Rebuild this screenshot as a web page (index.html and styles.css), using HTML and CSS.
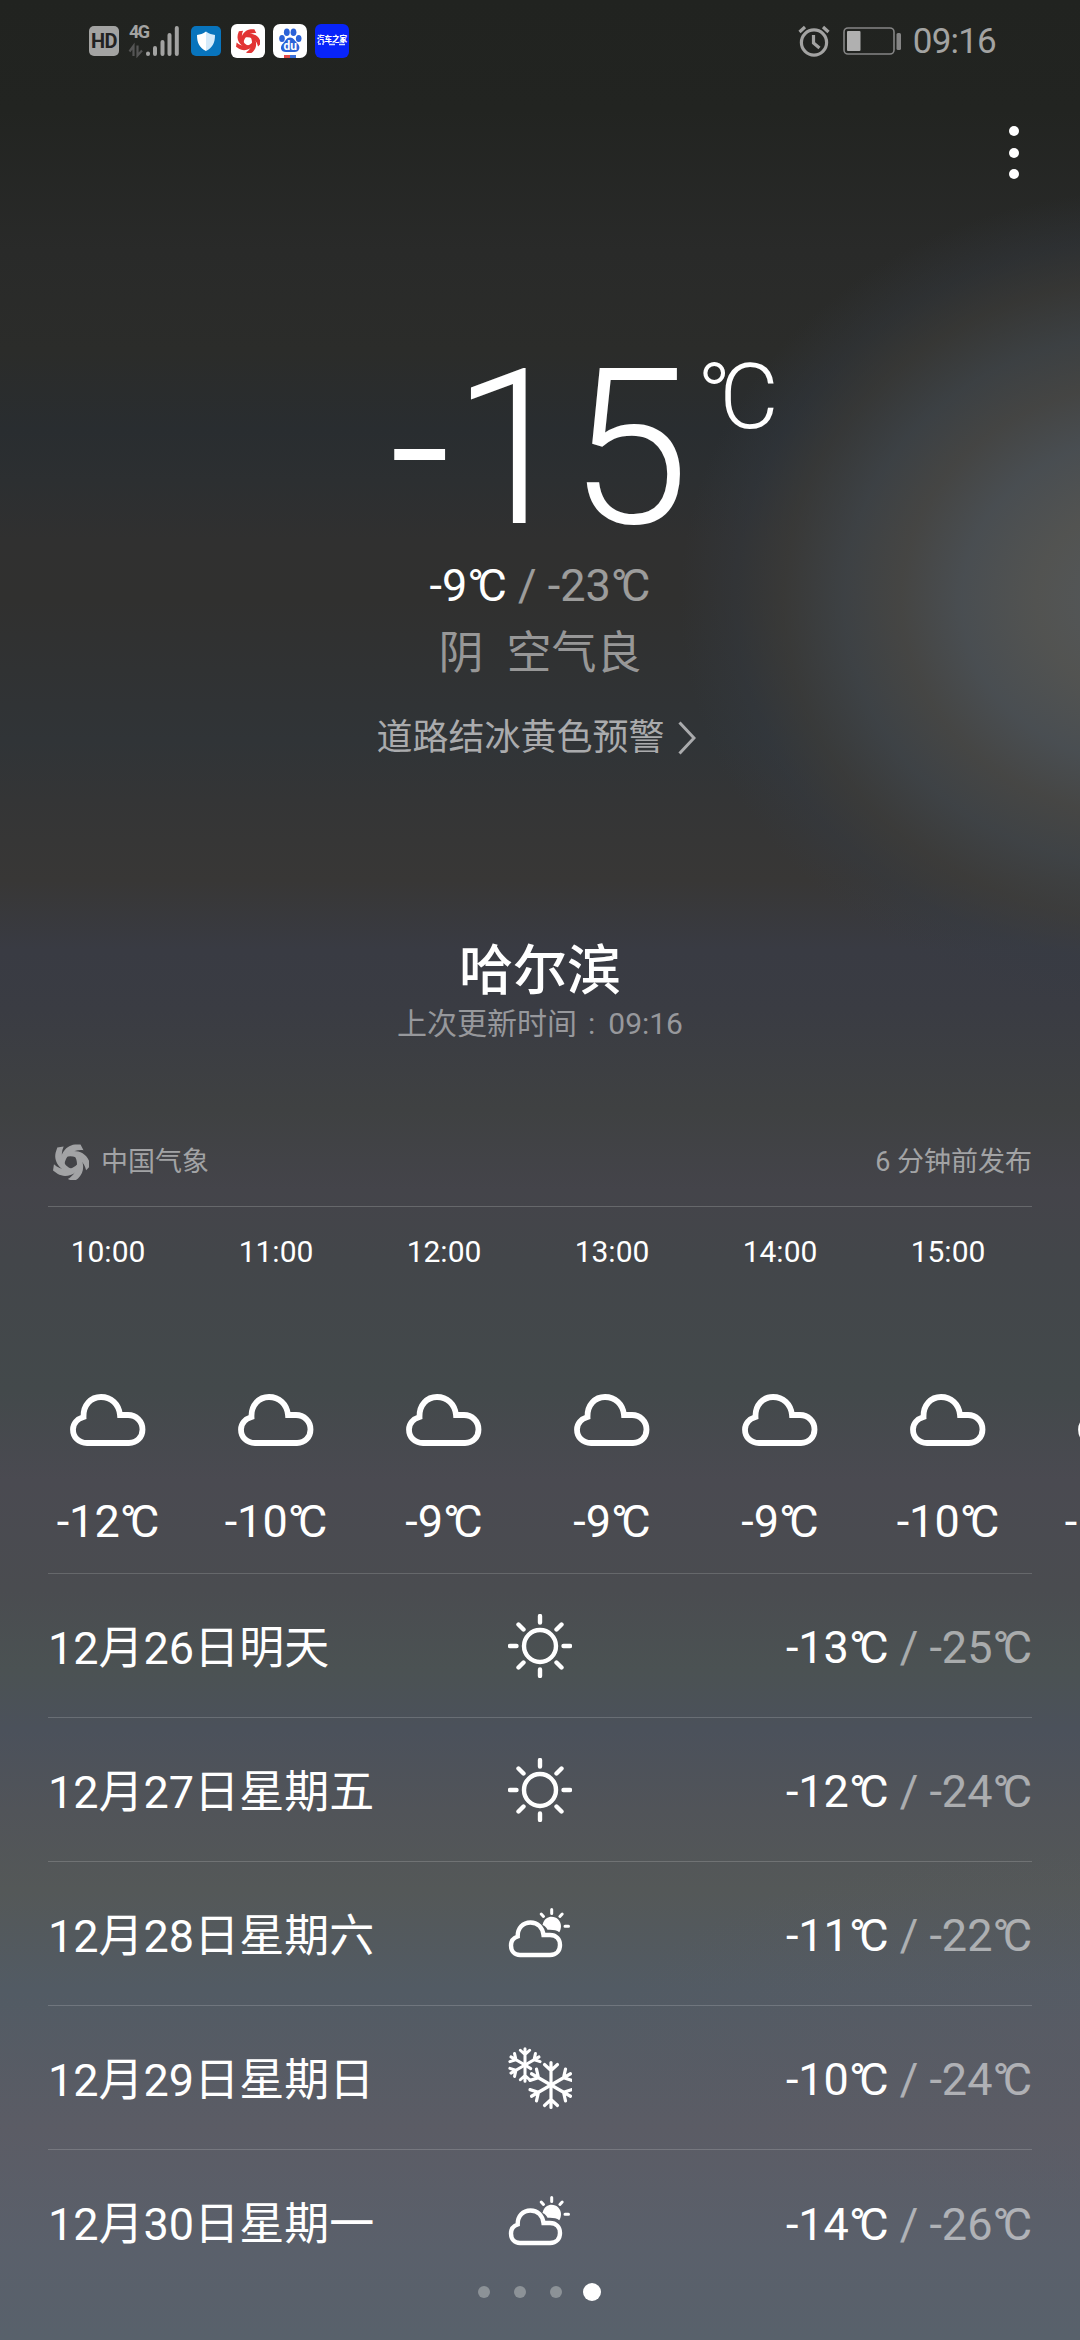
FILE: index.html
```html
<!DOCTYPE html>
<html lang="zh-CN">
<head>
<meta charset="utf-8">
<title>哈尔滨天气</title>
<link rel="stylesheet" href="styles.css">
</head>
<body>
<svg width="0" height="0" class="defs">
  <defs>
    <symbol id="cloud" viewBox="0 0 76 52">
      <path d="M17 49H59C67 49 72.500 43 72.500 35.500C72.500 27 66 21 58 21H50C49 10 41 3 31 3C21 3 13 11 13.500 23C7 25 3 30 3 35.500C3 43 8.500 49 17 49Z" fill="none" stroke="#fff" stroke-width="5.800"/>
    </symbol>
    <symbol id="sun" viewBox="0 0 64 64">
      <g fill="none" stroke="#fff" stroke-width="4.400" stroke-linecap="round">
        <circle cx="32" cy="32" r="16"/>
        <path d="M32 2V8.500M32 55.500V62M2 32H8.500M55.500 32H62M10.500 10.500L15.500 15.500M48.500 48.500L53.500 53.500M53.500 10.500L48.500 15.500M15.500 48.500L10.500 53.500"/>
      </g>
    </symbol>
    <symbol id="partly" viewBox="0 0 64 52">
      <path d="M34.500 17C36 10.500 40 8.700 43.500 8.700C49 8.700 53 13 53 18C53 20.500 52.300 22.500 51.300 24.300C48.500 22 44.500 21.500 39.500 21.800C38.500 19.500 37 18 34.500 17Z" fill="#fff"/>
      <path d="M43.700 1.500V5.500M33.200 6L35.500 8.500M54.200 6L51.900 8.500M57 18.200H60.500" fill="none" stroke="#fff" stroke-width="3" stroke-linecap="round"/>
      <path d="M12 47H42C48.500 47 52 42.500 52 37C52 31 48 27 42 27H35.500C34.500 19 29.500 14.500 22.500 14.500C15 14.500 9.500 20 9.700 28.500C5 30 3 33.500 3 37.500C3 43 6.500 47 12 47Z" fill="none" stroke="#fff" stroke-width="4.400"/>
    </symbol>
    <symbol id="snow" viewBox="0 0 64 64">
      <g fill="none" stroke="#fff" stroke-linecap="round">
        <g transform="translate(43 39)" stroke-width="3.200">
          <path id="branch" d="M0 0V-22.500M-6.500 -20.500L0 -14.500L6.500 -20.500"/>
          <use href="#branch" transform="rotate(60)"/><use href="#branch" transform="rotate(120)"/>
          <use href="#branch" transform="rotate(180)"/><use href="#branch" transform="rotate(240)"/>
          <use href="#branch" transform="rotate(300)"/>
        </g>
        <g transform="translate(17 19) scale(.72)" stroke-width="4.200">
          <use href="#branch"/><use href="#branch" transform="rotate(60)"/>
          <path d="M0 0L8 5"/>
          <use href="#branch" transform="rotate(180)"/><use href="#branch" transform="rotate(240)"/>
          <use href="#branch" transform="rotate(300)"/>
        </g>
      </g>
    </symbol>
    <symbol id="swirl" viewBox="-18 -18 36 36">
      <path id="blade" d="M-9.500 5.500C-13 -4 -7 -16.500 4 -17.500H9.500L12.500 -11.800C2.500 -13 -6 -6.500 -6.500 3C-7.500 3.500 -8.500 4.500 -9.500 5.500Z"/>
      <use href="#blade" transform="rotate(72)"/><use href="#blade" transform="rotate(144)"/>
      <use href="#blade" transform="rotate(216)"/><use href="#blade" transform="rotate(288)"/>
    </symbol>
  </defs>
</svg>
<div class="screen">
  <header class="status">
    <div class="status-left">
      <span class="hd">HD</span>
      <div class="signal">
        <span class="net">4G</span>
        <svg width="52" height="34" viewBox="0 0 52 34">
          <path d="M5.500 32V22L1.500 27.500M9.500 21.500V31.500L14 26.500" fill="none" stroke="#555" stroke-width="2.200"/>
          <g stroke="#a3a3a2" stroke-width="4" stroke-linecap="round"><path d="M20 29.500V30M27 24V30M34.500 18V30M41.500 11V30M48.800 4V30"/></g>
        </svg>
      </div>
      <svg class="app shield" viewBox="0 0 30 30">
        <rect width="30" height="30" rx="5" fill="#0874bd"/>
        <path d="M15 5.500C12 8 9 8.500 6 9C6 17 8.500 21.500 15 25Z" fill="#fff"/>
        <path d="M15 5.500C18 8 21 8.500 24 9C24 17 21.500 21.500 15 25Z" fill="#d5eafa"/>
      </svg>
      <svg class="app" viewBox="0 0 34 34">
        <rect width="34" height="34" rx="6" fill="#fff"/>
        <use href="#swirl" x="5" y="5" width="24" height="24" fill="#e23434"/>
      </svg>
      <svg class="app" viewBox="0 0 34 34">
        <rect width="34" height="34" rx="7" fill="#fff"/>
        <g fill="#2a62d8">
          <ellipse cx="9" cy="14.500" rx="2.800" ry="3.600"/><ellipse cx="13.800" cy="8.300" rx="2.900" ry="3.800"/>
          <ellipse cx="20.500" cy="8.300" rx="2.900" ry="3.800"/><ellipse cx="25.700" cy="14.500" rx="2.800" ry="3.600"/>
          <path d="M17 13.500C20.500 13.500 22 17 24.500 19.500C28 23 26.500 28 21.500 28H13C7.500 28 6.500 23 10 19.500C12.500 17 13.500 13.500 17 13.500Z"/>
        </g>
        <text x="17.200" y="26.300" class="du">du</text>
        <rect x="11" y="31" width="6" height="3" fill="#e04a4a"/><rect x="17" y="31" width="6" height="3" fill="#3a6fd8"/>
      </svg>
      <svg class="app" viewBox="0 0 34 34">
        <rect width="34" height="34" rx="6" fill="#0824fa"/>
        <text x="17" y="17.500" class="auto">汽车之家</text>
        <path d="M3 20H6M7 20H9M14 20.500H20M24 20.500H30" stroke="#d5dcff" stroke-width="1.300"/>
      </svg>
    </div>
    <div class="status-right">
      <svg width="32" height="32" viewBox="0 0 32 32" fill="none" stroke="#a3a3a2" stroke-width="3.200">
        <circle cx="16" cy="17.500" r="12.600"/><path d="M1.500 7L7 2M30.500 7L25 2M15.500 10V18L21.500 23"/>
      </svg>
      <svg class="battery" width="60" height="28" viewBox="0 0 60 28">
        <rect x="1" y="1" width="50" height="26" rx="4" fill="none" stroke="#858585" stroke-width="1.600"/>
        <rect x="4" y="4" width="13.500" height="20" rx="1" fill="#b0b0b0"/><rect x="53.500" y="6" width="4.500" height="17" rx="1.500" fill="#858585"/>
      </svg>
      <span class="clock">09:16</span>
    </div>
  </header>

  <div class="toolbar"><div class="menu"><i></i><i></i><i></i></div></div>

  <section class="now">
    <div class="big"><span class="minus">-</span><span class="one">1</span><span class="five">5</span><span class="unit">°C</span></div>
    <div class="range">-9<span class="deg">°C</span> <span class="low">/ -23<span class="deg">°C</span></span></div>
    <div class="cond"><span>阴</span><span>空气良</span></div>
    <div class="warn"><span>道路结冰黄色预警</span>
      <svg width="18" height="34" viewBox="0 0 18 34"><path d="M1.500 1.500L16 17L1.500 32.500" fill="none" stroke="#aaabad" stroke-width="3"/></svg>
    </div>
    <h1 class="city">哈尔滨</h1>
    <div class="updated">上次更新时间<span class="colon">:</span>09:16</div>
  </section>

  <section class="source">
    <div class="brand"><svg width="36" height="36"><use href="#swirl" width="36" height="36" fill="#a2a3a5"/></svg><span>中国气象</span></div>
    <span class="age">6 分钟前发布</span>
  </section>

  <section class="hours">
    <div class="hour"><time>10:00</time><svg class="ci"><use href="#cloud"/></svg><span>-12<span class="deg">°C</span></span></div>
    <div class="hour"><time>11:00</time><svg class="ci"><use href="#cloud"/></svg><span>-10<span class="deg">°C</span></span></div>
    <div class="hour"><time>12:00</time><svg class="ci"><use href="#cloud"/></svg><span>-9<span class="deg">°C</span></span></div>
    <div class="hour"><time>13:00</time><svg class="ci"><use href="#cloud"/></svg><span>-9<span class="deg">°C</span></span></div>
    <div class="hour"><time>14:00</time><svg class="ci"><use href="#cloud"/></svg><span>-9<span class="deg">°C</span></span></div>
    <div class="hour"><time>15:00</time><svg class="ci"><use href="#cloud"/></svg><span>-10<span class="deg">°C</span></span></div>
    <div class="hour"><time></time><svg class="ci"><use href="#cloud"/></svg><span>-12<span class="deg">°C</span></span></div>
  </section>

  <section class="days">
    <div class="day"><span class="date">12月26日明天</span><svg class="di"><use href="#sun"/></svg><span class="temps">-13<span class="deg">°C</span> <span class="low">/ -25<span class="deg">°C</span></span></span></div>
    <div class="day"><span class="date">12月27日星期五</span><svg class="di"><use href="#sun"/></svg><span class="temps">-12<span class="deg">°C</span> <span class="low">/ -24<span class="deg">°C</span></span></span></div>
    <div class="day"><span class="date">12月28日星期六</span><svg class="di pc"><use href="#partly"/></svg><span class="temps">-11<span class="deg">°C</span> <span class="low">/ -22<span class="deg">°C</span></span></span></div>
    <div class="day"><span class="date">12月29日星期日</span><svg class="di"><use href="#snow"/></svg><span class="temps">-10<span class="deg">°C</span> <span class="low">/ -24<span class="deg">°C</span></span></span></div>
    <div class="day"><span class="date">12月30日星期一</span><svg class="di pc"><use href="#partly"/></svg><span class="temps">-14<span class="deg">°C</span> <span class="low">/ -26<span class="deg">°C</span></span></span></div>
  </section>
  <nav class="pager"><i></i><i></i><i></i><i class="on"></i></nav>
</div>
</body>
</html>
```
FILE: styles.css
```css
* { box-sizing: border-box; }
body { margin: 0; background: #222421; }
i { font-style: normal; }
svg { display: block; }
.defs { position: absolute; }
.screen {
  position: relative;
  width: 1080px;
  height: 2340px;
  overflow: hidden;
  display: flex;
  flex-direction: column;
  color: #fff;
  font: 400 45px/60px Roboto, "Noto Sans CJK SC", sans-serif;
  background:
    radial-gradient(ellipse 470px 410px at 1150px 600px, rgba(84,89,93,1), rgba(84,85,83,.95) 24%, rgba(76,81,85,.9) 40%, rgba(74,74,72,.82) 53%, rgba(66,71,75,.75) 65%, rgba(63,63,61,.58) 78%, rgba(54,60,68,.35) 88%, rgba(50,56,64,0) 100%),
    radial-gradient(ellipse 480px 180px at 1090px 2030px, rgba(94,92,101,.35), rgba(94,92,101,0)),
    linear-gradient(#212320 0, #222421 110px, #292a29 250px, #2b2c2a 350px, #292d30 430px, #2c2f31 480px, #303030 540px, #30302f 600px, #303437 740px, #343536 800px, #383736 880px, #393b43 950px, #3a3c43 1010px, #3f4142 1110px, #44444a 1190px, #43464a 1260px, #43494b 1390px, #4a4a51 1480px, #4a4c50 1590px, #4b5253 1670px, #4b515b 1730px, #515459 1810px, #545858 1890px, #525b64 1990px, #5b5c65 2130px, #5a606b 2250px, #58616b 2340px);
}
.status { flex: none; height: 82px; display: flex; justify-content: space-between; padding: 0 84px 0 89px; align-items: center; }
.status-left { display: flex; align-items: center; }
.hd { width: 30px; height: 30px; border-radius: 5px; background: #a3a3a2; color: #222; font: 700 20px/31px Roboto, sans-serif; text-align: center; letter-spacing: -.5px; }
.signal { position: relative; width: 52px; height: 34px; margin: 0 11px 0 9px; }
.net { position: absolute; left: 1px; top: -1px; font: 700 18px/18px Roboto, sans-serif; color: #a3a3a2; letter-spacing: -1.500px; }
.app { width: 34px; height: 34px; margin-right: 8px; }
.app.shield { width: 30px; height: 30px; margin-right: 10px; }
.du { font: 700 12px Roboto, sans-serif; fill: #fff; text-anchor: middle; }
.auto { font: 900 7.500px "Noto Sans CJK SC", sans-serif; fill: #fff; text-anchor: middle; }
.status-right { display: flex; align-items: center; color: #a3a3a2; }
.battery { margin: 0 10px 0 13px; }
.clock { font-size: 35px; line-height: 42px; letter-spacing: -.8px; padding-top: 2px; }
.toolbar { flex: none; height: 218px; padding: 44px 61px 0; display: flex; justify-content: flex-end; }
.menu { display: flex; flex-direction: column; gap: 11.500px; }
.menu i { width: 10px; height: 10px; border-radius: 50%; background: #fff; }

.now { flex: none; height: 820px; display: flex; flex-direction: column; align-items: center; }
.big { height: 252px; align-self: flex-start; padding: 4px 0 0 389px; display: flex; font: 300 217px/290px Roboto, sans-serif; }
.minus { width: 63px; }
.one { width: 117px; }
.five { width: 128px; }
.unit { font: 300 91px/86px Roboto, sans-serif; letter-spacing: -.13em; white-space: nowrap; margin-top: 50px; }
.deg { letter-spacing: -.145em; margin-right: .145em; }
.range { margin-top: 4px; }
.low { opacity: .52; }
.cond { display: flex; gap: 23px; margin-top: 8px; color: #979797; }
.warn { display: flex; align-items: center; gap: 13px; margin: 24px 8px 0 0; font-size: 36px; color: #aaabad; }
.city { margin: 169px 0 0; font: 500 54px/60px "Noto Sans CJK SC", sans-serif; }
.updated { font-size: 30px; line-height: 50px; margin-top: 2px; color: #97989c; }
.colon { margin: 0 13px 0 11px; }

.source { flex: none; height: 87px; margin: 0 48px; padding: 0 0 2px 5px; border-bottom: 1px solid #66686b; display: flex; justify-content: space-between; align-items: center; font-size: 27px; color: #a2a3a5; }
.brand { display: flex; align-items: center; gap: 12px; }
.hours { flex: none; height: 367px; width: 984px; margin-left: 48px; border-bottom: 1px solid #66686b; display: flex; }
.hour { flex: none; width: 168px; position: relative; left: -24px; display: flex; flex-direction: column; align-items: center; }
.hour time { font-size: 30px; line-height: 40px; height: 40px; margin-top: 25px; }
.hour > span { margin-top: 46px; }
.ci { width: 76px; height: 52px; margin-top: 122px; }
.days { flex: none; margin: 0 48px; }
.day { height: 144px; display: grid; grid-template-columns: 1fr 64px 1fr; align-items: center; border-bottom: 1px solid rgba(255,255,255,.17); }
.day:last-child { border: 0; }
.date { padding-top: 6px; }
.di { width: 64px; height: 64px; }
.pc { height: 52px; }
.temps { text-align: right; padding-top: 5px; }
.pager { position: absolute; left: 478px; top: 2283px; height: 18px; display: flex; align-items: center; gap: 24px; }
.pager i { width: 12px; height: 12px; border-radius: 50%; background: #8c9297; }
.pager .on { width: 18px; height: 18px; margin-left: -3px; background: #fff; }
```
